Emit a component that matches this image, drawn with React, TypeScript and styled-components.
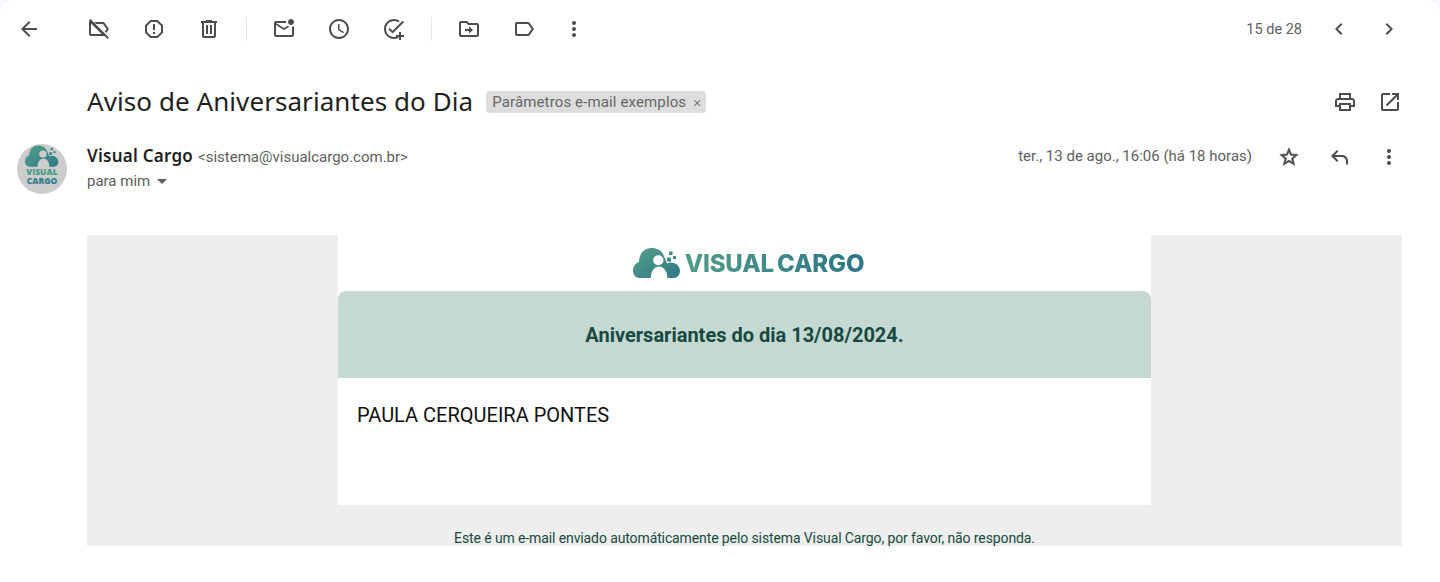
import React from "react";
import styled, { createGlobalStyle } from "styled-components";

const Global = createGlobalStyle`
  html, body { margin: 0; padding: 0; background: #f6f8fc; }
  body { font-family: Roboto, "Liberation Sans", sans-serif; }
`;

const Page = styled.div`
  width: 1440px; height: 582px; background: #fff; border-radius: 16px 16px 0 0;
  overflow: hidden; box-sizing: border-box;
`;
const Toolbar = styled.div`
  height: 58px; display: flex; align-items: center; padding: 0 36px 0 9px;
`;
const Group = styled.div<{ $ml?: number }>`
  display: flex; align-items: center; gap: 15px; margin-left: ${p => p.$ml ?? 0}px;
`;
const IconBtn = styled.button<{ $w?: number }>`
  width: ${p => p.$w ?? 40}px; height: 40px; border: 0; padding: 0; background: none;
  display: flex; align-items: center; justify-content: center; color: #4a4d4c; flex: none;
`;
const Divider = styled.div`
  width: 1px; height: 24px; background: #e6e8ea; margin: 0 17px;
`;
const Spacer = styled.div`flex: 1;`;
const Pager = styled.span`
  font-size: 14.5px; color: #5e5e5e; margin-right: 17px;
`;
const SubjectRow = styled.div`
  height: 58px; padding: 0 35px 0 87px; display: flex; align-items: center;
  margin-top: 15px; box-sizing: border-box;
`;
const Subject = styled.h1`
  margin: 0 0 2px; font-family: "Noto Sans", Roboto, sans-serif; font-weight: 400; font-size: 26px;
  letter-spacing: 0.07px; color: #1f1f1f; white-space: nowrap;
`;
const Chip = styled.span`
  margin-left: 13px; height: 22px; width: 220px; box-sizing: border-box; padding: 0 5px 0 6px; background: #ddd; border-radius: 4px;
  display: inline-flex; align-items: center; justify-content: space-between; font-size: 15px; letter-spacing: 0.13px; color: #666;
`;
const ChipX = styled.span`font-size: 15px; font-weight: 300; color: #555; letter-spacing: 0;`;
const SenderRow = styled.div`
  display: flex; padding: 0 31px 0 17px; height: 62px; margin-top: 13px;
`;
const Avatar = styled.div`
  width: 50px; height: 50px; border-radius: 50%; background: #ccc; flex: none;
  display: flex; flex-direction: column; align-items: center; overflow: hidden; padding-top: 1px; box-sizing: border-box;
`;
const AvatarLine = styled.div<{ $c: string }>`
  font-family: "Open Sans", sans-serif; font-weight: 800; font-size: 8.5px; line-height: 9px; color: ${p => p.$c};
  text-align: center;
`;
const SenderInfo = styled.div`margin-left: 20px; flex: 1;`;
const SenderLine = styled.div`
  display: flex; align-items: baseline; gap: 5px; height: 24px; line-height: 24px;
`;
const SenderName = styled.span`
  font-family: "Noto Sans", Roboto, sans-serif; font-weight: 600; font-size: 17px; letter-spacing: 0.25px; color: #1f1f1f;
`;
const SenderMail = styled.span`font-size: 15px; color: #5e5e5e;`;
const ToLine = styled.div`
  font-size: 15px; color: #5e5e5e; display: flex; align-items: center; gap: 7px; height: 26px;
`;
const Caret = styled.span`
  width: 0; height: 0; border: 5px solid transparent; border-top-color: #5e5e5e; border-bottom: 0;
`;
const DateText = styled.span`
  font-size: 15px; color: #5e5e5e; margin-right: 17px; line-height: 24px; height: 24px;
`;
const MetaActions = styled.div`
  display: flex; align-items: center; height: 26px; gap: 10px;
`;
const Mail = styled.div`
  margin: 29px 38px 0 87px; height: 311px; background: #eee; overflow: hidden;
`;
const Sheet = styled.div`
  width: 813px; margin: 0 auto; background: #fff;
`;
const LogoBar = styled.div`
  height: 56px; display: flex; align-items: center; justify-content: center; gap: 4px; padding-left: 8px; box-sizing: border-box;
`;
const LogoText = styled.div`
  font-family: Inter, sans-serif; font-weight: 800; font-size: 24px; letter-spacing: -0.15px; word-spacing: -2px;
  background: linear-gradient(90deg, #4f9c87, #2b7588); -webkit-background-clip: text; background-clip: text; color: transparent;
`;
const Banner = styled.div`
  height: 87px; background: #c5d9d2; border-radius: 8px 8px 0 0; display: flex; align-items: center; justify-content: center;
  font-weight: 700; font-size: 20px; color: #17493f;
`;
const Content = styled.div`
  height: 127px; padding: 25px 19px 0; box-sizing: border-box; font-size: 20px; line-height: 25px; color: #111;
`;
const Footer = styled.div`
  text-align: center; margin-top: 25px; font-size: 14px; line-height: 16px; color: #17493f; letter-spacing: -0.11px;
`;

const P: React.FC<{ d: string; s?: number; bold?: boolean }> = ({ d, s = 24, bold }) => (
  <svg width={s} height={s} viewBox="0 0 24 24" fill="currentColor" stroke={bold ? "currentColor" : "none"} strokeWidth={bold ? 0.7 : 0}><path d={d} /></svg>
);

const I = {
  back: "M20 11H7.83l5.59-5.59L12 4l-8 8 8 8 1.41-1.41L7.83 13H20v-2z",
  labelOff: "M2.1 3.5 3.5 2.1l18.4 18.4-1.4 1.4-2.9-2.9H4a2 2 0 0 1-2-2V5.5c0-.3.1-.6.2-.9L2.1 3.5zM4 6.4V17h10.6L4 6.4zM7.2 5H16c.7 0 1.3.3 1.6.8L22 12l-2.8 3.9-1.4-1.4L19.5 12l-3.5-5H9.2L7.2 5z",
  report: "M15.73 3H8.27L3 8.27v7.46L8.27 21h7.46L21 15.73V8.27L15.73 3zM19 14.9L14.9 19H9.1L5 14.9V9.1L9.1 5h5.8L19 9.1v5.8zM11 7h2v6h-2zM11 15h2v2h-2z",
  del: "M15 4V3H9v1H4v2h1v13c0 1.1.9 2 2 2h10c1.1 0 2-.9 2-2V6h1V4h-5zm2 15H7V6h10v13zM9 8h2v9H9zm4 0h2v9h-2z",
  unread: "M22 8.98V18c0 1.1-.9 2-2 2H4c-1.1 0-2-.9-2-2V6c0-1.1.9-2 2-2h10.1c-.06.32-.1.66-.1 1s.04.68.1 1H4l8 5 3.67-2.29c.47.43 1.02.76 1.63.98L12 13 4 8v10h16V9.9c.74-.15 1.42-.48 2-.92zM16 5c0 1.66 1.34 3 3 3s3-1.34 3-3-1.34-3-3-3-3 1.34-3 3z",
  clock: "M11.99 2C6.47 2 2 6.48 2 12s4.47 10 9.99 10C17.52 22 22 17.52 22 12S17.52 2 11.99 2zM12 20c-4.42 0-8-3.58-8-8s3.58-8 8-8 8 3.58 8 8-3.58 8-8 8zM12.5 7H11v6l5.25 3.15.75-1.23-4.5-2.67z",
  task: "M22 5.18 10.59 16.6l-4.24-4.24 1.41-1.41 2.83 2.83 10-10L22 5.18zM12 20c-4.41 0-8-3.59-8-8s3.59-8 8-8c1.57 0 3.04.46 4.28 1.25l1.45-1.45A9.9 9.9 0 0 0 12 2C6.48 2 2 6.48 2 12s4.48 10 10 10c1.73 0 3.36-.44 4.78-1.22l-1.5-1.5C14.28 19.74 13.17 20 12 20zM19 15h-2v3h-3v2h3v3h2v-3h3v-2h-3v-3z",
  move: "M20 6h-8l-2-2H4c-1.1 0-2 .9-2 2v12c0 1.1.9 2 2 2h16c1.1 0 2-.9 2-2V8c0-1.1-.9-2-2-2zm0 12H4V6h5.17l2 2H20v10zM12 14H8v-2h4V9.5l4 3.5-4 3.5V14z",
  label: "M17.63 5.84C17.27 5.33 16.67 5 16 5L5 5.01C3.9 5.01 3 5.9 3 7v10c0 1.1.9 1.99 2 1.99L16 19c.67 0 1.27-.33 1.63-.84L22 12l-4.37-6.16zM16 17H5V7h11l3.55 5L16 17z",
  more: "M12 8c1.1 0 2-.9 2-2s-.9-2-2-2-2 .9-2 2 .9 2 2 2zm0 2c-1.1 0-2 .9-2 2s.9 2 2 2 2-.9 2-2-.9-2-2-2zm0 6c-1.1 0-2 .9-2 2s.9 2 2 2 2-.9 2-2-.9-2-2-2z",
  prev: "M15.41 7.41 14 6l-6 6 6 6 1.41-1.41L10.83 12z",
  next: "M8.59 16.59 10 18l6-6-6-6-1.41 1.41L13.17 12z",
  print: "M19 8h-1V3H6v5H5c-1.66 0-3 1.34-3 3v6h4v4h12v-4h4v-6c0-1.66-1.34-3-3-3zM8 5h8v3H8V5zm8 14H8v-4h8v4zm4-4h-2v-2H6v2H4v-4c0-.55.45-1 1-1h14c.55 0 1 .45 1 1v4z",
  open: "M19 19H5V5h7V3H5c-1.11 0-2 .9-2 2v14c0 1.1.89 2 2 2h14c1.1 0 2-.9 2-2v-7h-2v7zM14 3v2h3.59l-9.83 9.83 1.41 1.41L19 6.41V10h2V3h-7z",
  star: "M22 9.24l-7.19-.62L12 2 9.19 8.63 2 9.24l5.46 4.73L5.82 21 12 17.27 18.18 21l-1.63-7.03L22 9.24zM12 15.4l-3.76 2.27 1-4.28-3.32-2.88 4.38-.38L12 6.1l1.71 4.04 4.38.38-3.32 2.88 1 4.28L12 15.4z",
  reply: "M21 19.5h-2V16c0-2.2-1.8-4-4-4H7.83l3.58 3.59L10 17l-6-6 6-6 1.41 1.41L7.83 10H15c3.31 0 6 2.69 6 6v3.5z"
};

const Cloud: React.FC<{ id: string; w: number; h: number }> = ({ id, w, h }) => (
  <svg width={w} height={h} viewBox="0 0 48 30">
    <defs>
      <linearGradient id={id} x1="0" y1="0" x2="1" y2="1">
        <stop offset="0" stopColor="#55a086" />
        <stop offset="1" stopColor="#2d7888" />
      </linearGradient>
    </defs>
    <path
      fill={`url(#${id})`}
      fillRule="evenodd"
      d="M7 30C2.5 30 0 26.5 0 22.5 0 18 3 15 6 14 6 6 11 0 18.5 0 24 0 28 2.5 30 6L32 10.5 34 15.5C35 15 36.500 14.500 38 14.500 43 14.500 47 18.500 47 23 47 27 44 30 41 30H34.500A8.500 11.500 0 0 0 17.500 30ZM25.300 7.300A5.200 5 0 1 0 25.300 17.300 5.200 5 0 1 0 25.300 7.300Z"
    />
    <rect x="34" y="9.500" width="4" height="4" fill={`url(#${id})`} />
    <rect x="36" y="3.500" width="3.500" height="3.500" fill={`url(#${id})`} />
    <rect x="40" y="8" width="3" height="3" fill={`url(#${id})`} />
  </svg>
);

export default function App() {
  return (
    <Page>
      <Global />
      <Toolbar>
        <IconBtn><P d={I.back} /></IconBtn>
        <Group $ml={30}>
          <IconBtn><P d={I.labelOff} /></IconBtn>
          <IconBtn><P d={I.report} /></IconBtn>
          <IconBtn><P d={I.del} /></IconBtn>
        </Group>
        <Divider />
        <Group>
          <IconBtn><P d={I.unread} /></IconBtn>
          <IconBtn><P d={I.clock} /></IconBtn>
          <IconBtn><P d={I.task} /></IconBtn>
        </Group>
        <Divider />
        <Group>
          <IconBtn><P d={I.move} /></IconBtn>
          <IconBtn><P d={I.label} /></IconBtn>
          <IconBtn $w={30}><P d={I.more} /></IconBtn>
        </Group>
        <Spacer />
        <Pager>15 de 28</Pager>
        <Group>
          <IconBtn><P d={I.prev} /></IconBtn>
          <IconBtn $w={30}><P d={I.next} /></IconBtn>
        </Group>
      </Toolbar>
      <SubjectRow>
        <Subject>Aviso de Aniversariantes do Dia</Subject>
        <Chip>Parâmetros e-mail exemplos <ChipX>×</ChipX></Chip>
        <Spacer />
        <Group>
          <IconBtn $w={30}><P d={I.print} /></IconBtn>
          <IconBtn $w={30}><P d={I.open} /></IconBtn>
        </Group>
      </SubjectRow>
      <SenderRow>
        <Avatar>
          <Cloud id="av" w={34} h={22} />
          <AvatarLine $c="#4a9a86">VISUAL</AvatarLine>
          <AvatarLine $c="#2f7f8a">CARGO</AvatarLine>
        </Avatar>
        <SenderInfo>
          <SenderLine>
            <SenderName>Visual Cargo</SenderName>
            <SenderMail>&lt;sistema@visualcargo.com.br&gt;</SenderMail>
          </SenderLine>
          <ToLine>para mim <Caret /></ToLine>
        </SenderInfo>
        <DateText>ter., 13 de ago., 16:06 (há 18 horas)</DateText>
        <MetaActions>
          <IconBtn><P d={I.star} s={22} bold /></IconBtn>
          <IconBtn><P d={I.reply} /></IconBtn>
          <IconBtn><P d={I.more} /></IconBtn>
        </MetaActions>
      </SenderRow>
      <Mail>
        <Sheet>
          <LogoBar>
            <Cloud id="lg" w={48} h={30} />
            <LogoText>VISUAL CARGO</LogoText>
          </LogoBar>
          <Banner>Aniversariantes do dia 13/08/2024.</Banner>
          <Content>PAULA CERQUEIRA PONTES</Content>
        </Sheet>
        <Footer>Este é um e-mail enviado automáticamente pelo sistema Visual Cargo, por favor, não responda.</Footer>
      </Mail>
    </Page>
  );
}
